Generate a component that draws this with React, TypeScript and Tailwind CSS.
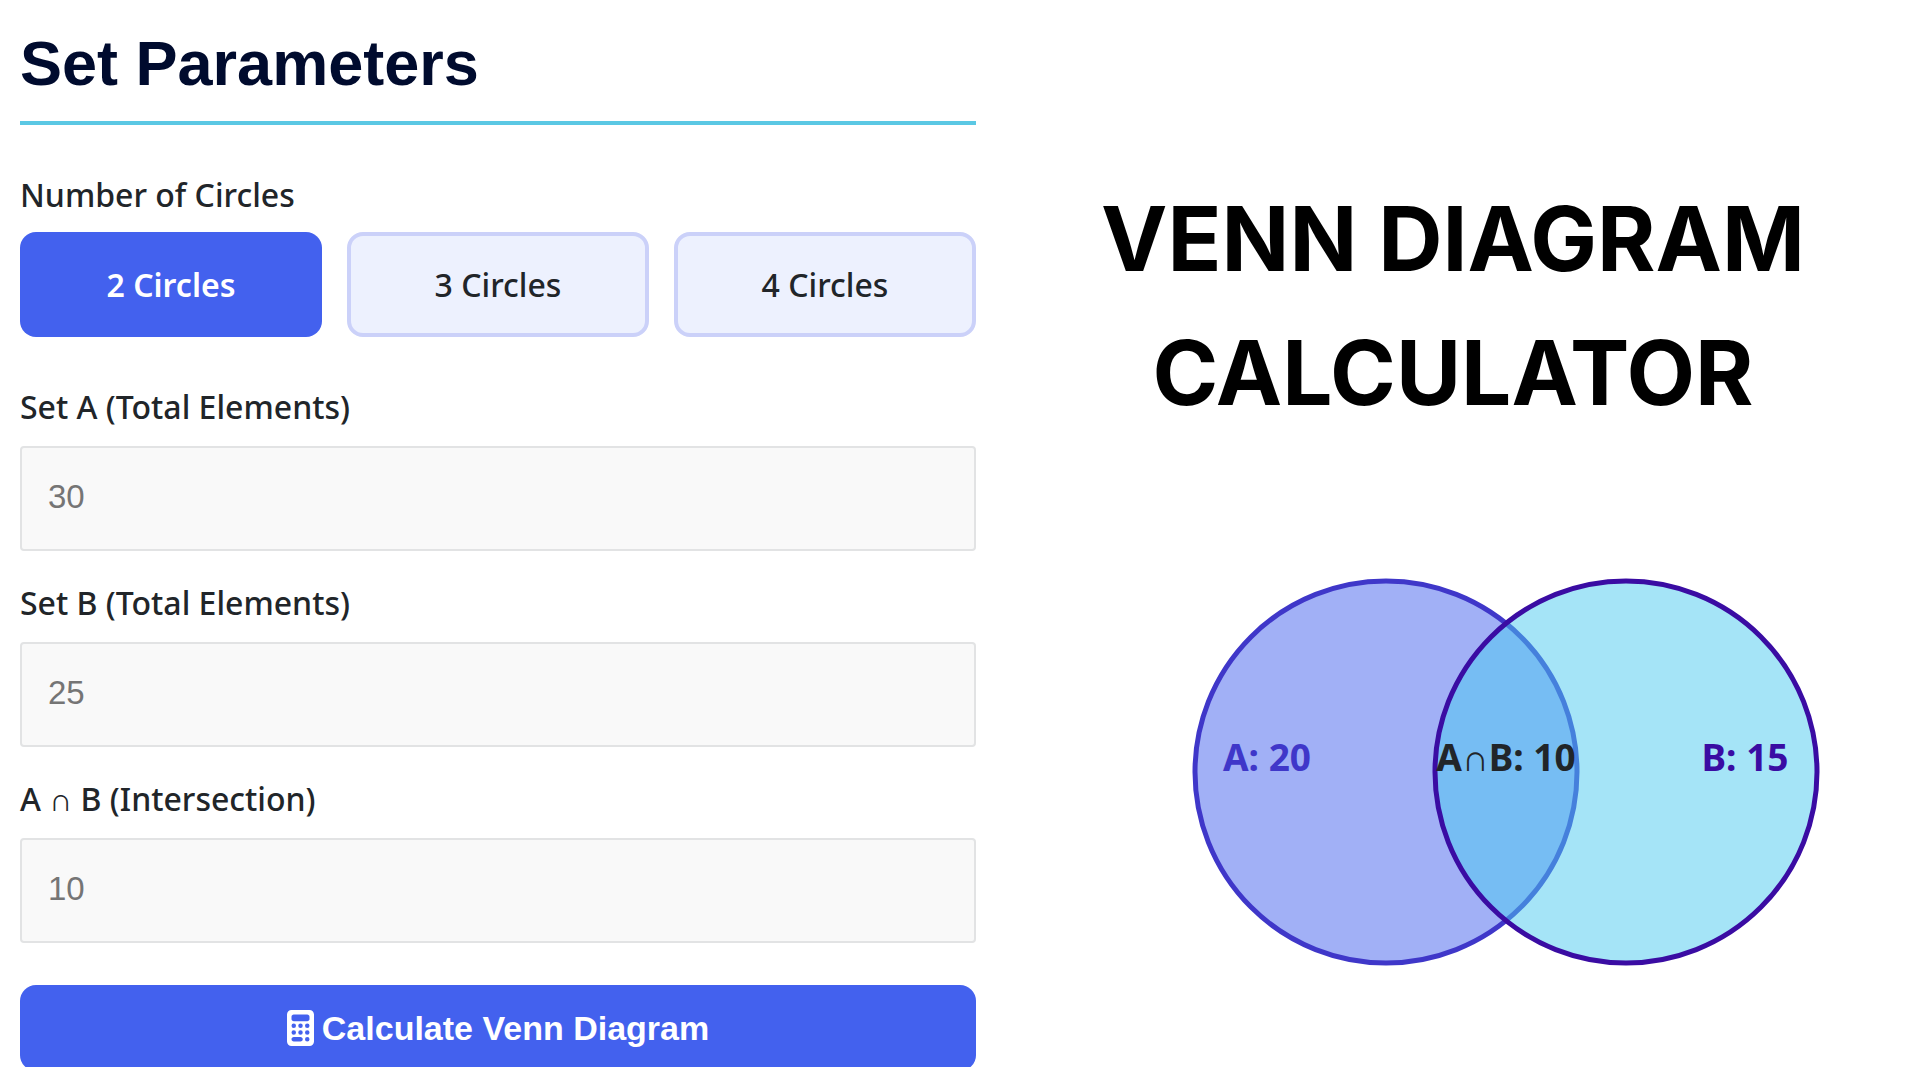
import { useState } from 'react'
import { FaCalculator } from 'react-icons/fa6'

const circleOptions = [2, 3, 4]

const fields = [
  { id: 'setA', label: 'Set A (Total Elements)', placeholder: '30' },
  { id: 'setB', label: 'Set B (Total Elements)', placeholder: '25' },
  { id: 'intersection', label: 'A ∩ B (Intersection)', placeholder: '10' },
]

function VennDiagram() {
  return (
    <svg viewBox="0 0 628 390" className="w-full max-w-[628px] font-['Noto_Sans',sans-serif] text-[37px] font-bold" role="img" aria-label="Venn diagram of A and B">
      <circle cx="194" cy="195" r="191" fill="#4361ee" fillOpacity="0.5" stroke="#3f37c9" strokeWidth="5" />
      <circle cx="434" cy="195" r="191" fill="#4cc9f0" fillOpacity="0.5" stroke="#3a0ca3" strokeWidth="5" />
      <text x="75" y="194" textAnchor="middle" fill="#3f37c9">A: 20</text>
      <text x="314" y="194" textAnchor="middle" fill="#212529">A∩B: 10</text>
      <text x="553" y="194" textAnchor="middle" fill="#3a0ca3">B: 15</text>
    </svg>
  )
}

export default function App() {
  const [circles, setCircles] = useState(2)

  return (
    <main className="grid h-screen grid-cols-[61fr_59fr] overflow-hidden bg-white">
      <form className="pt-6 pl-5" onSubmit={(e) => e.preventDefault()}>
        <h2 className="mb-12 h-[101px] border-b-4 border-[#5bc8e4] font-['Liberation_Sans',sans-serif] text-[63px] leading-[78px] font-bold text-[#000b2e]">
          Set Parameters
        </h2>

        <fieldset className="mb-12 font-['Noto_Sans',sans-serif] text-[32px] text-[#212529]">
          <legend className="mb-[15px] leading-[44px] font-medium">Number of Circles</legend>
          <div className="grid grid-cols-3 gap-[25px]">
            {circleOptions.map((n) => (
              <button
                key={n}
                type="button"
                onClick={() => setCircles(n)}
                className={
                  n === circles
                    ? 'h-[105px] rounded-2xl bg-[#4361ee] font-semibold text-white'
                    : 'h-[105px] rounded-2xl border-4 border-[#cbd1f9] bg-[#edf1fe] font-medium'
                }
              >
                {n} Circles
              </button>
            ))}
          </div>
        </fieldset>

        {fields.map((field) => (
          <div key={field.id} className="mb-[30px]">
            <label htmlFor={field.id} className="mb-[17px] block font-['Noto_Sans',sans-serif] text-[32px] leading-[44px] font-medium text-[#212529]">
              {field.label}
            </label>
            <input
              id={field.id}
              placeholder={field.placeholder}
              className="block h-[105px] w-full rounded-sm border-2 border-[#e2e3e4] bg-[#f9f9f9] px-[26px] pb-1 font-['Liberation_Sans',sans-serif] text-[33px] placeholder:text-[#757575]"
            />
          </div>
        ))}

        <button type="submit" className="mt-[42px] flex h-[86px] w-full items-center justify-center gap-2 rounded-2xl bg-[#4361ee] font-['Liberation_Sans',sans-serif] text-[34px] font-bold text-white">
          <FaCalculator className="h-9 w-[27px]" />
          Calculate Venn Diagram
        </button>
      </form>

      <section className="flex flex-col items-center pt-[172px] pl-[10px]">
        <h1 className="text-center font-['Inter',sans-serif] text-[89px] leading-[134px] font-bold text-black">
          VENN DIAGRAM
          <br />
          CALCULATOR
        </h1>
        <div className="mt-[137px] flex w-full justify-center pl-[106px]">
          <VennDiagram />
        </div>
      </section>
    </main>
  )
}
